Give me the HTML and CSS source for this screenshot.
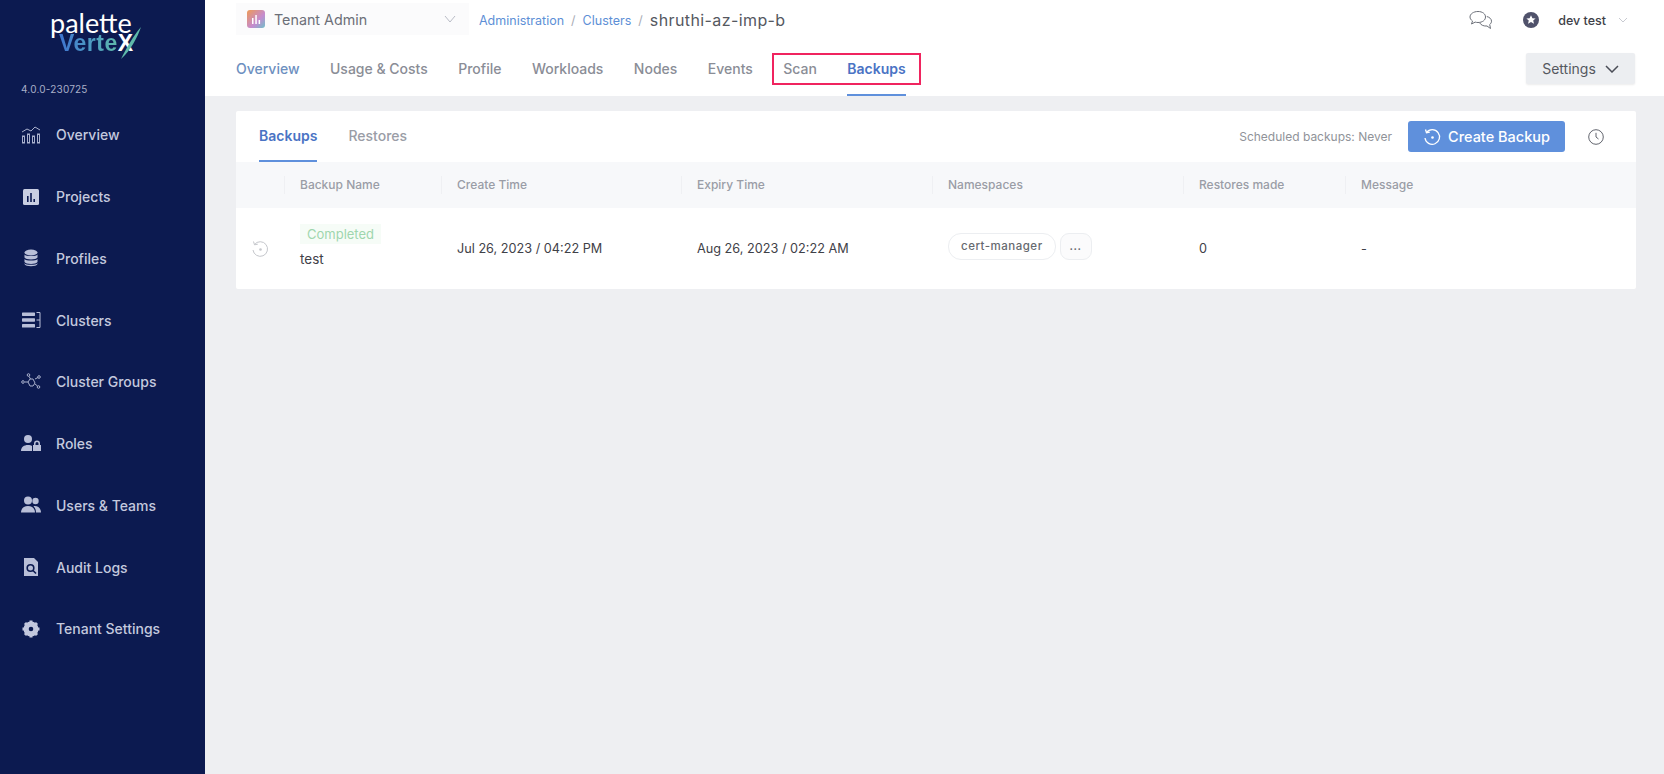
FILE: index.html
```html
<!DOCTYPE html>
<html lang="en">
<head>
    <meta charset="UTF-8">
    <meta name="viewport" content="width=device-width, initial-scale=1.0">
    <title>Backups - Palette</title>
    <link rel="stylesheet" href="styles.css">
</head>
<body>

    <aside class="sidebar">
        <div class="logo">
            <div class="logo-top">palette</div>
            <div class="logo-bottom"><span class="logo-verte">Verte</span><span class="logo-x">X</span>
                <svg class="logo-slash" width="22" height="34" viewBox="0 0 22 34"><path d="M1 33C6 23 13 10 21 1C17 12 11 24 1 33Z" fill="#5fb9aa"/></svg>
            </div>
        </div>
        <div class="version">4.0.0-230725</div>
        <nav class="menu">
            <a class="menu-item">
                <svg class="menu-icon" viewBox="0 0 20 20" fill="none" stroke="#a9b0cc" stroke-width="1"><path d="M1 7l5-3 4 2 4-4 5 3"/><rect x="1.5" y="11" width="2" height="7"/><rect x="6.5" y="9" width="2" height="9"/><rect x="11.5" y="11" width="2" height="7"/><rect x="16.5" y="9" width="2" height="9"/></svg>
                <span>Overview</span>
            </a>
            <a class="menu-item">
                <svg class="menu-icon" viewBox="0 0 20 20"><rect x="2" y="2" width="16" height="16" rx="1.5" fill="#c9cee2"/><path d="M6 9h1.6v6H6zM9.2 6h1.6v9H9.2zM12.4 12H14v3h-1.6z" fill="#0c1a50"/></svg>
                <span>Projects</span>
            </a>
            <a class="menu-item">
                <svg class="menu-icon" viewBox="0 0 20 20" fill="#b9bfd8"><ellipse cx="10" cy="4.5" rx="6.5" ry="3"/><path d="M3.5 6.5c1 2 12 2 13 0v3c-1 2.5-12 2.5-13 0zM3.5 11c1 2 12 2 13 0v3c-1 2.5-12 2.5-13 0zM3.5 15.200c1 2 12 2 13 0v.8c-1 3-12 3-13 0z"/></svg>
                <span>Profiles</span>
            </a>
            <a class="menu-item">
                <svg class="menu-icon" viewBox="0 0 20 20" fill="#b9bfd8"><rect x="1" y="2.500" width="13" height="3.400" rx=".6"/><rect x="1" y="8.300" width="13" height="3.400" rx=".6"/><rect x="1" y="14.100" width="13" height="3.400" rx=".6"/><path d="M15.500 2.500h3.500v15h-3.500M15.500 10h3.500" fill="none" stroke="#b9bfd8" stroke-width="1"/></svg>
                <span>Clusters</span>
            </a>
            <a class="menu-item">
                <svg class="menu-icon" viewBox="0 0 20 20" fill="none" stroke="#a9b0cc" stroke-width="1"><circle cx="2" cy="10" r="1.300"/><circle cx="7.500" cy="3" r="1.300"/><circle cx="18" cy="5" r="1.300"/><circle cx="17.500" cy="15" r="1.300"/><path d="M4 10h3l2-3h3l2 4-2 3H9l-2-4M8 4.300L9.500 7M14 7l3-1.500M14 12l2.500 2"/></svg>
                <span>Cluster Groups</span>
            </a>
            <a class="menu-item">
                <svg class="menu-icon" viewBox="0 0 20 20" fill="#b9bfd8"><circle cx="7" cy="5" r="4"/><path d="M0 17c0-4 3-6 7-6 2 0 3 .4 4 1v5z"/><path d="M13 11V9.500a3 3 0 0 1 6 0V11h1v6h-8v-6zm1.500 0h3V9.500a1.500 1.500 0 0 0-3 0z" fill-rule="evenodd"/></svg>
                <span>Roles</span>
            </a>
            <a class="menu-item">
                <svg class="menu-icon" viewBox="0 0 20 20" fill="#b9bfd8"><circle cx="7" cy="5.500" r="4"/><circle cx="14.500" cy="6" r="3.200"/><path d="M0 17.500c0-4 3-6.500 7-6.500s7 2.500 7 6.500zM15 17.500c0-2.500-.8-4.700-2.500-6.300 4-.8 7.500 2 7.500 6.300z"/></svg>
                <span>Users &amp; Teams</span>
            </a>
            <a class="menu-item">
                <svg class="menu-icon" viewBox="0 0 20 20"><path d="M3 1h10l4 4v14H3z" fill="#b9bfd8"/><circle cx="9.500" cy="11" r="3.300" fill="none" stroke="#0c1a50" stroke-width="1.600"/><path d="M12 13.500l3 3" stroke="#0c1a50" stroke-width="1.600"/></svg>
                <span>Audit Logs</span>
            </a>
            <a class="menu-item">
                <svg class="menu-icon" viewBox="0 0 20 20"><circle cx="10" cy="10" r="5.500" fill="none" stroke="#c3c8de" stroke-width="4"/><path d="M10 1.500v17M1.500 10h17M4 4l12 12M16 4L4 16" stroke="#c3c8de" stroke-width="3"/><circle cx="10" cy="10" r="2.300" fill="#0c1a50"/></svg>
                <span>Tenant Settings</span>
            </a>
        </nav>
    </aside>

    <div class="main">
        <header class="topbar">
            <div class="top-row">
                <div class="scope">
                    <svg class="scope-icon" width="18" height="18" viewBox="0 0 18 18"><defs><linearGradient id="scopeFill" x1="0" y1="0" x2="1" y2="1"><stop offset="0" stop-color="#ee9a55"/><stop offset=".6" stop-color="#c58bd0"/><stop offset="1" stop-color="#6fc0c8"/></linearGradient></defs><rect width="18" height="18" rx="3" fill="url(#scopeFill)"/><path d="M5 8h1.500v6H5zM8.300 5h1.500v9H8.300zM11.600 10h1.500v4h-1.500z" fill="#fff"/></svg>
                    <span class="scope-name">Tenant Admin</span>
                    <svg class="scope-caret" width="12" height="8" viewBox="0 0 12 8" fill="none" stroke="#b9bcc6" stroke-width="1"><path d="M1 1l5 6 5-6"/></svg>
                </div>
                <div class="crumbs">
                    <a>Administration</a>
                    <span class="sep">/</span>
                    <a>Clusters</a>
                    <span class="sep">/</span>
                    <span class="crumb-title">shruthi-az-imp-b</span>
                </div>
                <div class="user-area">
                    <svg class="chat-icon" width="24" height="20" viewBox="0 0 24 20" fill="none" stroke="#6c7079" stroke-width="1"><path d="M9 1.500c4.500 0 7.500 2.400 7.500 5.500S13.500 12.500 9 12.500c-1 0-2-.1-2.800-.4L2.500 14l1-3C2 9.900 1 8.600 1 7c0-3.100 3.500-5.500 8-5.500z"/><path d="M17.800 6.500c2.800.7 4.700 2.500 4.700 4.700 0 1.400-.7 2.500-1.800 3.300l.8 4-3.500-2.500c-3 .3-6-.7-7.500-3.300"/></svg>
                    <svg class="star-icon" width="16" height="16" viewBox="0 0 16 16"><circle cx="8" cy="8" r="8" fill="#50526b"/><path d="M8 3.200l1.400 3 3.200.3-2.400 2.100.8 3.200L8 10.100l-3 1.700.8-3.200-2.400-2.100 3.200-.3z" fill="#fff"/></svg>
                    <span class="user-name">dev test</span>
                    <svg width="10" height="6" viewBox="0 0 10 6" fill="none" stroke="#c8cad1" stroke-width="1"><path d="M1 1l4 4 4-4"/></svg>
                </div>
            </div>
            <div class="nav-row">
                <nav class="tabs">
                    <a class="tab tab-first">Overview</a>
                    <a class="tab">Usage &amp; Costs</a>
                    <a class="tab">Profile</a>
                    <a class="tab">Workloads</a>
                    <a class="tab">Nodes</a>
                    <a class="tab">Events</a>
                    <a class="tab">Scan</a>
                    <a class="tab tab-active">Backups</a>
                    <div class="highlight"></div>
                </nav>
                <button class="settings-btn">Settings
                    <svg width="14" height="8" viewBox="0 0 14 8" fill="none" stroke="#4a4d57" stroke-width="1.500"><path d="M1 1l6 6 6-6"/></svg>
                </button>
            </div>
        </header>

        <main class="content">
            <section class="card">
                <div class="card-top">
                    <div class="subtabs">
                        <a class="subtab subtab-active">Backups</a>
                        <a class="subtab">Restores</a>
                    </div>
                    <div class="card-actions">
                        <span class="schedule">Scheduled backups: Never</span>
                        <button class="create-btn">
                            <svg width="18" height="18" viewBox="0 0 18 18" fill="none" stroke="#fff" stroke-width="1.300"><path d="M3.500 4.500A7.300 7.300 0 1 1 2 10"/><path d="M2.500 1.500l1 3.300 3.300-.6"/><circle cx="9.500" cy="9.500" r="1.300" fill="#fff" stroke="none"/></svg>
                            Create Backup
                        </button>
                        <svg class="clock-icon" width="16" height="16" viewBox="0 0 16 16" fill="none" stroke="#62656e" stroke-width="1"><circle cx="8" cy="8" r="7.300"/><path d="M8 3.800V8l2.500 2"/></svg>
                    </div>
                </div>
                <div class="table-head">
                    <div class="cell cell-icon"></div>
                    <div class="cell line">Backup Name</div>
                    <div class="cell line">Create Time</div>
                    <div class="cell line">Expiry Time</div>
                    <div class="cell line">Namespaces</div>
                    <div class="cell line">Restores made</div>
                    <div class="cell line">Message</div>
                </div>
                <div class="table-row">
                    <div class="cell cell-icon">
                        <svg width="18" height="18" viewBox="0 0 18 18" fill="none" stroke="#c5c7cc" stroke-width="1"><path d="M3.500 4.500A7.300 7.300 0 1 1 2 10"/><path d="M2.500 1.500l1 3.300 3.300-.6"/><circle cx="9.500" cy="9.500" r="1.300" fill="#c5c7cc" stroke="none"/></svg>
                    </div>
                    <div class="cell name-cell">
                        <span class="status">Completed</span>
                        <span class="backup-name">test</span>
                    </div>
                    <div class="cell">Jul 26, 2023 / 04:22 PM</div>
                    <div class="cell">Aug 26, 2023 / 02:22 AM</div>
                    <div class="cell ns-cell">
                        <span class="pill">cert-manager</span>
                        <span class="pill pill-more">...</span>
                    </div>
                    <div class="cell">0</div>
                    <div class="cell">-</div>
                </div>
            </section>
        </main>
    </div>

</body>
</html>
```

FILE: styles.css
```css
* {
    box-sizing: border-box;
}

body {
    margin: 0;
    height: 774px;
    display: flex;
    overflow: hidden;
    font-family: 'Inter', 'Liberation Sans', sans-serif;
    background-color: #eeeff2;
}

/* sidebar */
.sidebar {
    width: 205px;
    flex-shrink: 0;
    background-color: #0c1a50;
    color: #c4c9de;
}

.logo {
    padding-top: 12px;
    margin-left: 50px;
    width: 95px;
}

.logo-top {
    color: #ffffff;
    font-family: 'Lato', sans-serif;
    font-size: 27px;
    line-height: 21px;
}

.logo-bottom {
    position: relative;
    margin-left: 9px;
    font-family: 'Liberation Sans', sans-serif;
    font-weight: 700;
    font-size: 23px;
    line-height: 20px;
    letter-spacing: 0.5px;
    white-space: nowrap;
}

.logo-verte {
    color: transparent;
    background: linear-gradient(90deg, #3f74d0, #4f9fc0 60%, #5fb9aa);
    -webkit-background-clip: text;
    background-clip: text;
}

.logo-x {
    color: #ffffff;
}

.logo-slash {
    position: absolute;
    left: 61px;
    top: -7px;
}

.version {
    margin: 29px 0 0 21px;
    font-size: 10px;
    line-height: 14px;
    letter-spacing: 0.2px;
    color: #a9afc8;
}

.menu {
    margin-top: 8px;
}

.menu-item {
    height: 61.75px;
    padding-left: 21px;
    display: flex;
    align-items: center;
    gap: 15px;
    font-size: 14px;
    font-weight: 500;
}

.menu-icon {
    width: 20px;
    height: 20px;
    flex-shrink: 0;
}

/* top area */
.main {
    flex: 1;
    min-width: 0;
    display: flex;
    flex-direction: column;
}

.topbar {
    height: 96px;
    background-color: #ffffff;
    padding: 0 29px 0 31px;
}

.top-row {
    height: 40px;
    display: flex;
    align-items: center;
}

.scope {
    width: 233px;
    height: 32px;
    margin-top: -2px;
    padding: 0 13px 0 11px;
    display: flex;
    align-items: center;
    background-color: #fbfbfc;
}

.scope-name {
    margin-left: 9px;
    font-size: 14.300px;
    color: #6c6f78;
}

.scope-caret {
    margin-left: auto;
}

.crumbs {
    margin-left: 10px;
    display: flex;
    align-items: center;
    gap: 7px;
    font-size: 12.500px;
    color: #5d8fd6;
}

.sep {
    color: #a9acb5;
}

.crumb-title {
    font-size: 16px;
    letter-spacing: 0.4px;
    color: #55585f;
}

.user-area {
    margin-left: auto;
    padding-right: 7px;
    display: flex;
    align-items: center;
    font-size: 12.500px;
    font-weight: 500;
    color: #3e4048;
}

.chat-icon {
    margin-right: 30px;
}

.user-name {
    margin: 0 12px 0 19px;
}

.nav-row {
    display: flex;
    justify-content: space-between;
}

.tabs {
    position: relative;
    display: flex;
    gap: 30.450px;
    height: 56px;
}

.tab {
    height: 56px;
    padding-top: 20px;
    font-size: 14px;
    line-height: 18px;
    font-weight: 500;
    color: #8a8d96;
}

.tab-first {
    color: #6d8fc0;
}

.tab-active {
    color: #4a73c4;
    font-weight: 600;
    border-bottom: 2px solid #5f90dc;
}

.highlight {
    position: absolute;
    left: 536px;
    top: 13px;
    width: 149px;
    height: 32px;
    border: 2px solid #f0245f;
}

.settings-btn {
    width: 109px;
    height: 31px;
    margin-top: 13px;
    border: none;
    border-radius: 2px;
    display: flex;
    align-items: center;
    justify-content: center;
    gap: 9px;
    font-family: inherit;
    font-size: 14px;
    color: #55585f;
    background-color: #eceef1;
    box-shadow: 0 1px 2px rgba(0, 0, 0, 0.08);
}

/* content */
.content {
    padding: 15px 28px 0 31px;
}

.card {
    background-color: #ffffff;
    border-radius: 2px;
}

.card-top {
    height: 51px;
    padding: 0 32px 0 23px;
    display: flex;
    justify-content: space-between;
    align-items: center;
}

.subtabs {
    display: flex;
    gap: 31px;
    height: 51px;
}

.subtab {
    padding-top: 16px;
    height: 51px;
    font-size: 14px;
    line-height: 18px;
    font-weight: 500;
    color: #9a9da6;
}

.subtab-active {
    color: #4a73c4;
    font-weight: 600;
    border-bottom: 2px solid #5f90dc;
}

.card-actions {
    display: flex;
    align-items: center;
}

.schedule {
    font-size: 12px;
    color: #909399;
}

.create-btn {
    width: 157px;
    height: 31px;
    margin: 0 23px 0 16px;
    border: none;
    border-radius: 3px;
    display: flex;
    align-items: center;
    justify-content: center;
    gap: 7px;
    font-family: inherit;
    font-size: 14.500px;
    font-weight: 500;
    color: #ffffff;
    background-color: #5f90dc;
}

.table-head,
.table-row {
    display: grid;
    grid-template-columns: 48px 157px 240px 251px 251px 162px 1fr;
    align-items: center;
}

.table-head {
    height: 46px;
    background-color: #f7f8fa;
    font-size: 12px;
    font-weight: 500;
    color: #9a9da6;
}

.table-row {
    height: 81px;
    font-size: 12.700px;
    color: #3f4148;
}

.cell {
    padding-left: 15px;
}

.table-row .cell {
    padding-left: 16px;
}

.table-row .cell-icon,
.cell-icon {
    padding-left: 15px;
    display: flex;
}

.line {
    border-left: 1px solid #eff0f3;
    height: 18px;
    line-height: 18px;
}

.table-row .name-cell {
    display: flex;
    flex-direction: column;
    align-items: flex-start;
    margin-bottom: 6px;
}

.status {
    padding: 2px 7px;
    margin-bottom: 7px;
    font-size: 13px;
    line-height: 16px;
    color: #9fd6ae;
    background-color: #f6fcf7;
}

.backup-name {
    font-size: 13.500px;
}

.table-row .ns-cell {
    display: flex;
    gap: 4px;
    margin-bottom: 4px;
}

.pill {
    height: 27px;
    padding: 0 12px;
    border: 1px solid #eceef1;
    border-radius: 13px;
    line-height: 24px;
    font-size: 11.500px;
    font-weight: 500;
    letter-spacing: 0.5px;
    color: #66696f;
}

.pill-more {
    width: 32px;
    padding: 0;
    text-align: center;
    border-radius: 9px;
    background-color: #fbfbfc;
}
```
